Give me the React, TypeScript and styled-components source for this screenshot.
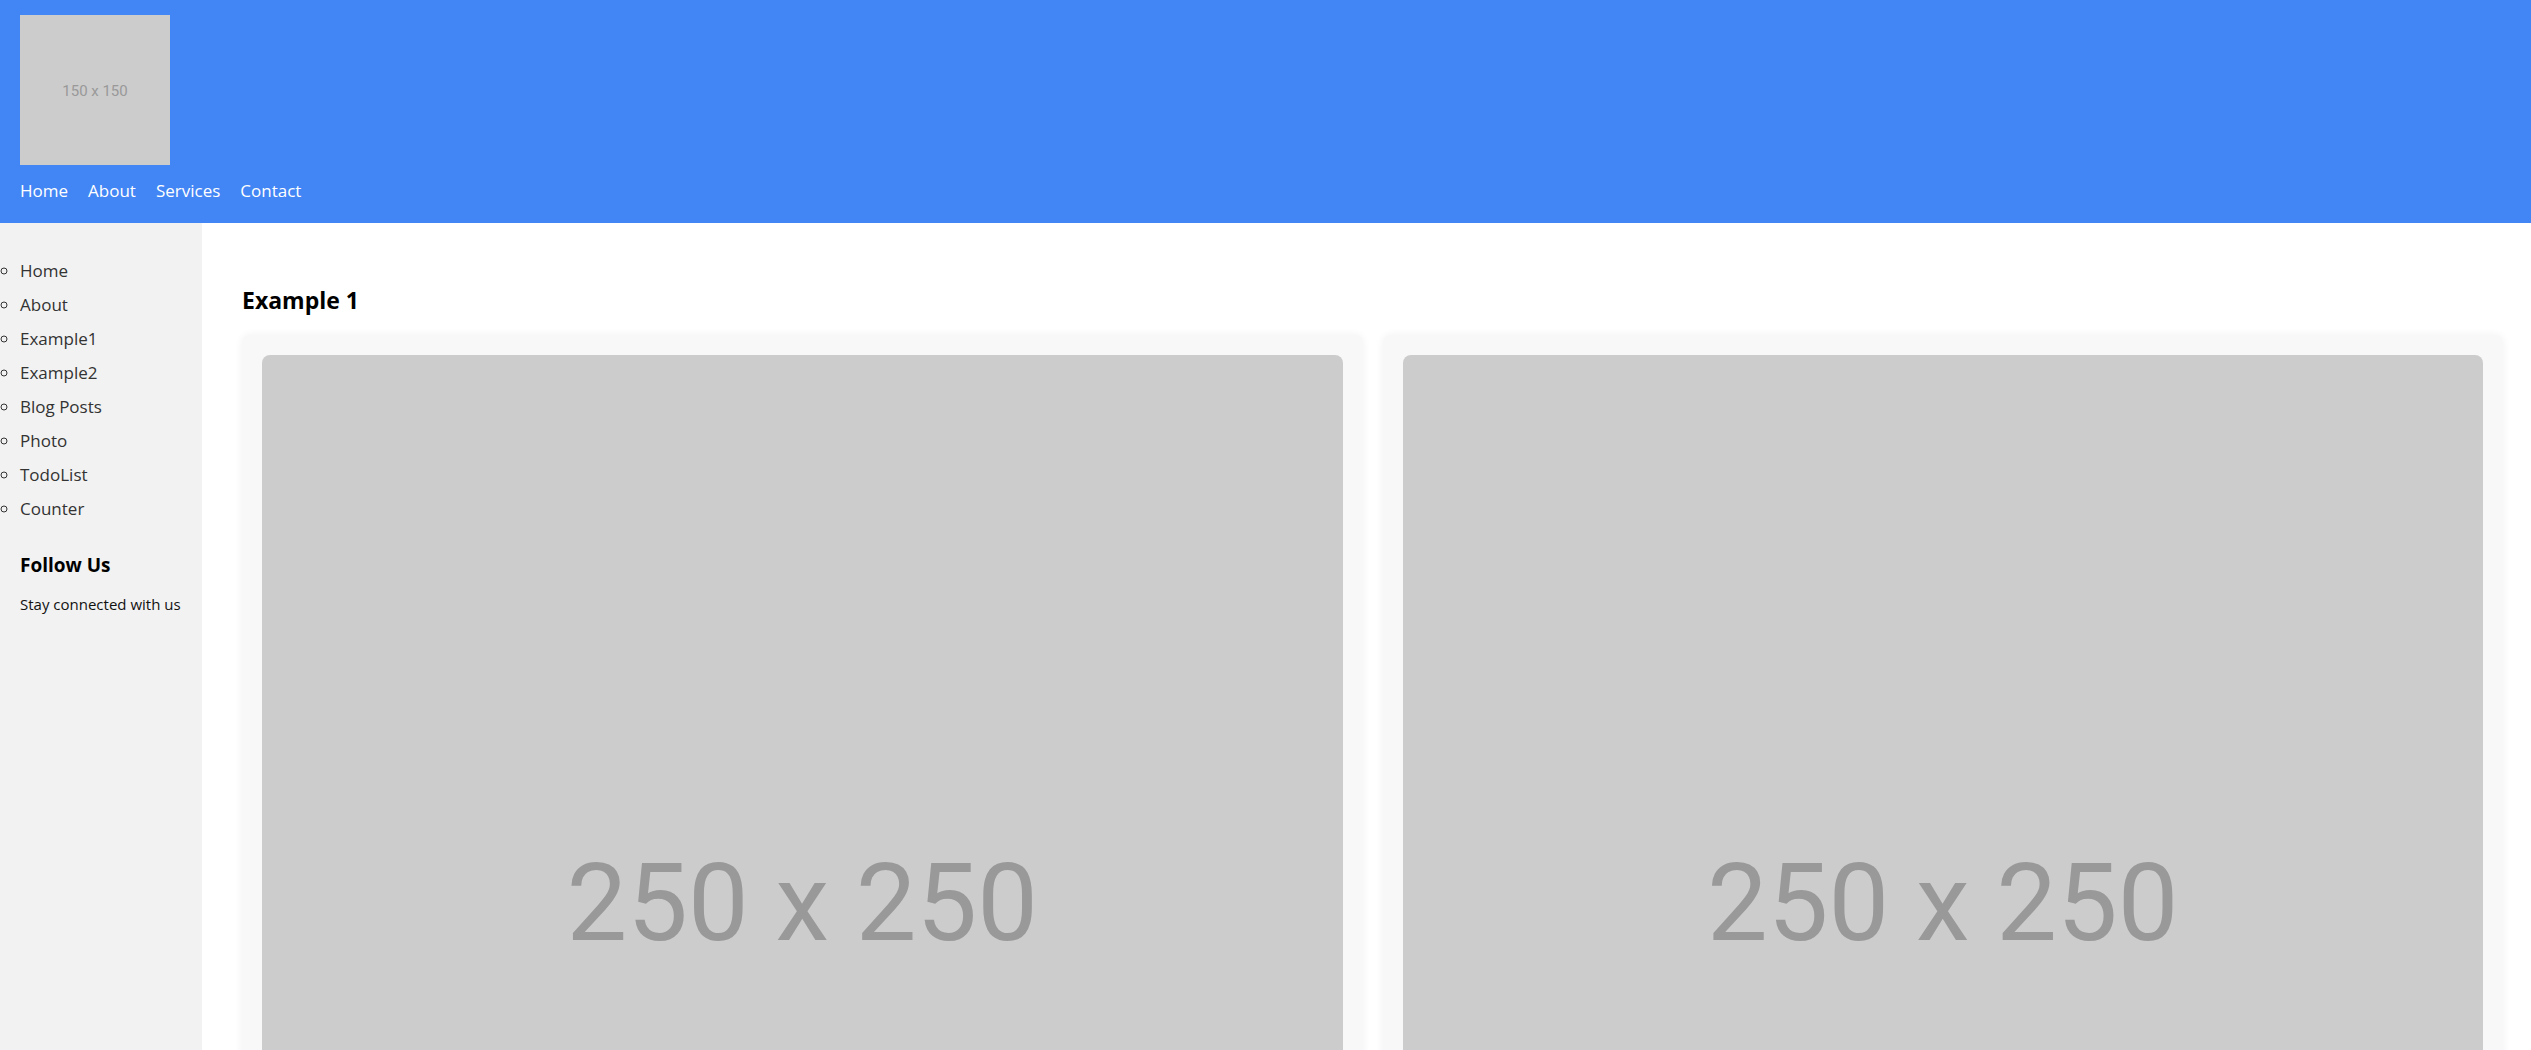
import React from "react";
import styled, { createGlobalStyle } from "styled-components";

const GlobalStyle = createGlobalStyle`
  html, body {
    margin: 0;
    padding: 0;
    background: #ffffff;
    font-family: "Open Sans", "Noto Sans", "Liberation Sans", sans-serif;
  }
  * { box-sizing: border-box; }
`;

const Header = styled.header`
  background: #4285f4;
  padding: 15px 20px 0;
`;

const Placeholder = styled.div<{ $size: number; $font: number; $radius?: number; $shift?: number }>`
  width: ${(p) => (p.$size ? `${p.$size}px` : "100%")};
  aspect-ratio: 1 / 1;
  background: #cccccc;
  color: #999999;
  display: flex;
  align-items: center;
  justify-content: center;
  padding-top: ${(p) => p.$shift ?? 0}px;
  font-family: Roboto, "Liberation Sans", Arial, sans-serif;
  font-size: ${(p) => p.$font}px;
  border-radius: ${(p) => p.$radius ?? 0}px;
  white-space: nowrap;
`;

const Nav = styled.nav`
  display: flex;
  gap: 20px;
  padding: 14px 0 20px;
  line-height: 24px;
`;

const NavLink = styled.a`
  color: #ffffff;
  font-size: 17px;
  text-decoration: none;
`;

const Layout = styled.div`
  display: flex;
  align-items: stretch;
  min-height: calc(100vh - 223px);
`;

const Sidebar = styled.aside`
  width: 202px;
  flex: 0 0 202px;
  background: #f2f2f2;
  padding: 31px 0 20px;
`;

const SideList = styled.ul`
  margin: 0;
  padding-left: 20px;
  list-style: circle;
`;

const SideItem = styled.li`
  line-height: 34px;
  font-size: 17px;
  color: #333333;
`;

const FollowBlock = styled.div`
  padding-left: 20px;
  margin-top: 27px;
`;

const FollowTitle = styled.h3`
  margin: 0;
  font-size: 19px;
  line-height: 24px;
  font-weight: 700;
  color: #000000;
`;

const FollowText = styled.p`
  margin: 17px 0 0;
  font-size: 15px;
  line-height: 20px;
  color: #111111;
`;

const Main = styled.main`
  flex: 1;
  padding: 62px 28px 40px 40px;
`;

const Heading = styled.h2`
  margin: 0 0 20px;
  font-size: 23px;
  line-height: 30px;
  font-weight: 700;
  color: #000000;
`;

const CardGrid = styled.div`
  display: grid;
  grid-template-columns: 1fr 1fr;
  gap: 20px;
`;

const Card = styled.div`
  background: #f8f8f8;
  border-radius: 8px;
  padding: 20px;
  box-shadow: 0 0 8px rgba(0, 0, 0, 0.06);
`;

const navItems = ["Home", "About", "Services", "Contact"];
const sideItems = ["Home", "About", "Example1", "Example2", "Blog Posts", "Photo", "TodoList", "Counter"];

export default function App() {
  return (
    <>
      <GlobalStyle />
      <Header>
        <Placeholder $size={150} $font={15} $shift={2}>150 x 150</Placeholder>
        <Nav>
          {navItems.map((n) => (
            <NavLink key={n} href="#">{n}</NavLink>
          ))}
        </Nav>
      </Header>
      <Layout>
        <Sidebar>
          <SideList>
            {sideItems.map((s) => (
              <SideItem key={s}>{s}</SideItem>
            ))}
          </SideList>
          <FollowBlock>
            <FollowTitle>Follow Us</FollowTitle>
            <FollowText>Stay connected with us</FollowText>
          </FollowBlock>
        </Sidebar>
        <Main>
          <Heading>Example 1</Heading>
          <CardGrid>
            {[0, 1].map((i) => (
              <Card key={i}>
                <Placeholder $size={0} $font={108} $radius={8} $shift={16}>250 x 250</Placeholder>
              </Card>
            ))}
          </CardGrid>
        </Main>
      </Layout>
    </>
  );
}
